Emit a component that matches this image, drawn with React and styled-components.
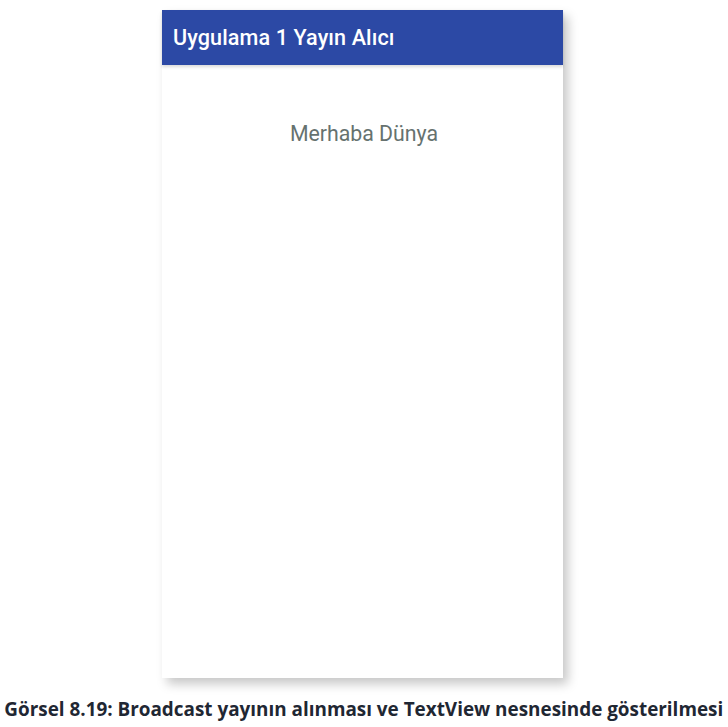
import React from 'react';
import styled, { createGlobalStyle } from 'styled-components';

const GlobalStyle = createGlobalStyle`
  html, body {
    margin: 0;
    padding: 0;
    background: #ffffff;
  }
`

const Page = styled.div`
  width: 728px;
  height: 727px;
  display: flex;
  flex-direction: column;
  align-items: center;
  padding-top: 10px;
  box-sizing: border-box;
`

const Phone = styled.div`
  width: 401px;
  height: 668px;
  margin-left: -3px;
  background: #ffffff;
  display: flex;
  flex-direction: column;
  box-shadow: 5px 6px 10px rgba(0, 0, 0, 0.22);
`

const AppBar = styled.div`
  height: 55px;
  background: #2c49a5;
  display: flex;
  align-items: center;
  padding: 0 11px;
  box-shadow: 0 2px 3px rgba(0, 0, 0, 0.15);
`

const Title = styled.h1`
  margin: 0;
  margin-top: -1px;
  font-family: Roboto, "Noto Sans", sans-serif;
  font-weight: 500;
  font-size: 21.6px;
  color: #ffffff;
  letter-spacing: 0.1px;
`

const Content = styled.div`
  flex: 1;
  display: flex;
  justify-content: center;
  padding: 56px 0 0 3px;
`

const Greeting = styled.p`
  margin: 0;
  font-family: Roboto, "Noto Sans", sans-serif;
  font-size: 21.3px;
  color: #66726f;
`

const Caption = styled.div`
  margin-top: 17px;
  font-family: "Open Sans", "Liberation Sans", sans-serif;
  font-weight: 700;
  font-size: 20px;
  color: #1f2733;
  white-space: nowrap;
  transform: scaleX(0.944);
`

export default function App() {
  return (
    <Page>
      <GlobalStyle />
      <Phone>
        <AppBar>
          <Title>Uygulama 1 Yayın Alıcı</Title>
        </AppBar>
        <Content>
          <Greeting>Merhaba Dünya</Greeting>
        </Content>
      </Phone>
      <Caption>Görsel 8.19: Broadcast yayının alınması ve TextView nesnesinde gösterilmesi</Caption>
    </Page>
  );
}
